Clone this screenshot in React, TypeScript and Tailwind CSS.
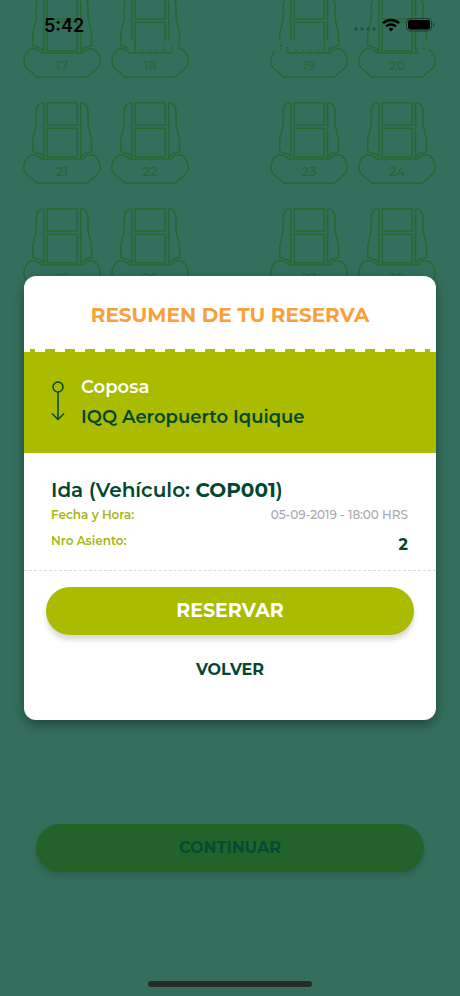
import { useState } from 'react'

interface SeatProps {
  number: number
  worn?: [number, number]
}

const seatRows = [
  [17, 18, 19, 20],
  [21, 22, 23, 24],
  [25, 26, 27, 28],
]

const wornSeats: Record<number, [number, number]> = {
  18: [18, 70],
  19: [5, 58],
  20: [60, 76],
}

function Seat({ number, worn }: SeatProps) {
  return (
    <button type="button" className="relative block h-[84px] w-[78px]" aria-label={`Asiento ${number}`}>
      <svg
        viewBox="0 0 78 84"
        className="block h-[84px] w-[78px]"
        fill="none"
        stroke="#24692f"
        strokeWidth="1.5"
        strokeLinejoin="round"
      >
        {/* respaldo */}
        <rect x="24" y="1.7" width="30.3" height="22.3" />
        <rect x="24" y="27.3" width="30.3" height="28.4" />
        <path d="M20.700 1.700v56.300M57.600 1.700v56.300" />
        <path d="M20.700 1.700C15 1.700 13.300 6 13.300 11v10c0 8-3.600 12-3.600 20v9.500l4 1.300c3 .5 5 1.500 7 4.200" />
        <path d="M57.600 1.700c5.700 0 7.400 4.300 7.400 9.300v10c0 8 3.600 12 3.600 20v9.500l-4 1.300c-3 .5-5 1.500-7 4.200" />
        {/* cojín */}
        <path d="M18.500 58h41.600c2-3 4.500-4.300 8-4.300 4.500 0 9.200 6 9.200 13 0 3.500-1.300 5-3 6.500L64 82.300H14L3.700 73.200C2 71.600.800 70 .800 66.700c0-7 4.400-13 9-13 3.700 0 6.300 1.300 8.700 4.300z" />
        {worn && (
          <line x1={worn[0]} x2={worn[1]} y1="51" y2="51" stroke="#346f5d" strokeWidth="12" strokeDasharray="5 2 4 3 6 2" />
        )}
      </svg>
      <span className="absolute inset-x-0 top-[60px] text-center text-[13px] leading-5 font-medium text-[#24692f]">
        {number}
      </span>
    </button>
  )
}

function StatusBar() {
  return (
    <div className="absolute inset-x-0 top-0 z-20 flex h-[50px] items-center justify-between pr-[25px] pl-[44px] text-black">
      <span className="pt-[2px] font-['Inter',sans-serif] text-lg font-semibold">5:42</span>
      <div className="flex items-center gap-[6px]">
        <svg viewBox="0 0 22 4" className="mt-2 h-1 w-[22px]" fill="#255044">
          <circle cx="2" cy="2" r="1.800" />
          <circle cx="8" cy="2" r="1.800" />
          <circle cx="14" cy="2" r="1.800" />
          <circle cx="20" cy="2" r="1.800" />
        </svg>
        <svg viewBox="0 0 18 14" className="h-[14px] w-[18px]" fill="none" stroke="currentColor" strokeWidth="2.500">
          <path d="M1 5.200a11.500 11.500 0 0 1 16 0" />
          <path d="M4 8.400a7.200 7.200 0 0 1 10 0" />
          <path d="M9 13.500L6.500 11a3.600 3.600 0 0 1 5 0z" fill="currentColor" stroke="none" />
        </svg>
        <svg viewBox="0 0 29 14" className="h-[14px] w-[29px]">
          <rect x=".5" y=".5" width="25" height="12.500" rx="3.800" fill="none" stroke="#1c3d33" />
          <rect x="2" y="2" width="22" height="9.500" rx="2.300" />
          <path d="M27 4.800c1.800.600 1.800 3.400 0 4z" fill="#1c3d33" />
        </svg>
      </div>
    </div>
  )
}

function RouteIcon() {
  return (
    <svg viewBox="0 0 14 42" className="h-[42px] w-[14px]" fill="none" stroke="#02472f" strokeWidth="1.500">
      <circle cx="7" cy="6" r="5" />
      <path d="M7 11v27.500M1 32.500l6 6 6-6" />
    </svg>
  )
}

function ReservationModal({ onClose }: { onClose: () => void }) {
  return (
    <div className="absolute inset-0 z-10 flex items-center justify-center px-6">
      <section
        role="dialog"
        aria-labelledby="resumen"
        className="w-full overflow-hidden rounded-xl bg-white text-[#02472f] shadow-[0_5px_12px_rgba(0,0,0,0.35)]"
      >
        <h1 id="resumen" className="pt-6 pb-[19px] text-center text-xl leading-[30px] font-bold text-[#f9a03a]">
          RESUMEN DE TU RESERVA
        </h1>
        {/* borde dentado */}
        <div className="mx-[6px] h-[3px] bg-[repeating-linear-gradient(90deg,#aabb00_0_5px,transparent_5px_15px,#aabb00_15px_20px)]" />
        <div className="flex items-center gap-4 bg-[#aabb00] pt-5 pr-7 pb-[21px] pl-[27px]">
          <RouteIcon />
          <div className="text-lg leading-[30px] font-semibold">
            <p className="text-white">Coposa</p>
            <p>IQQ Aeropuerto Iquique</p>
          </div>
        </div>

        <div className="border-b border-dashed border-[#dcdcdc] pt-[22px] pr-7 pb-[13px] pl-[27px]">
          <h2 className="text-xl leading-[30px] font-semibold">
            Ida (Vehículo: <b className="font-bold">COP001</b>)
          </h2>
          <dl className="text-xs leading-5">
            <div className="flex justify-between">
              <dt className="font-semibold text-[#a5b714]">Fecha y Hora:</dt>
              <dd className="font-medium text-[#a9a9ad]">05-09-2019 - 18:00 HRS</dd>
            </div>
            <div className="mt-[6px] flex justify-between">
              <dt className="font-semibold text-[#a5b714]">Nro Asiento:</dt>
              <dd className="pt-[2px] text-base leading-6 font-bold">2</dd>
            </div>
          </dl>
        </div>

        <div className="flex flex-col items-center px-[22px] pt-4 pb-[34px]">
          <button
            type="button"
            className="h-12 w-full rounded-full bg-[#aabb00] text-[19px] font-bold text-white shadow-[0_5px_5px_rgba(0,0,0,0.15)]"
          >
            RESERVAR
          </button>
          <button type="button" onClick={onClose} className="mt-[19px] h-8 px-6 text-base font-bold">
            VOLVER
          </button>
        </div>
      </section>
    </div>
  )
}

export default function App() {
  const [isModalOpen, setIsModalOpen] = useState(true)

  return (
    <div className="relative flex min-h-screen flex-col overflow-hidden bg-[#346f5d] font-['Montserrat','Inter',sans-serif]">
      <StatusBar />

      <main className="-mt-[5px] flex flex-1 flex-col gap-[22px] pr-6 pl-[23px]">
        {seatRows.map((row) => (
          <div key={row[0]} className="flex justify-between">
            <div className="flex gap-[10px]">
              {row.slice(0, 2).map((n) => (
                <Seat key={n} number={n} worn={wornSeats[n]} />
              ))}
            </div>
            <div className="flex gap-[10px]">
              {row.slice(2).map((n) => (
                <Seat key={n} number={n} worn={wornSeats[n]} />
              ))}
            </div>
          </div>
        ))}
      </main>

      <footer className="flex flex-col items-center px-9 pb-[9px]">
        <button
          type="button"
          onClick={() => setIsModalOpen(true)}
          className="h-12 w-full rounded-full bg-[#23632a] text-base font-bold text-[#024b34] shadow-[0_4px_6px_rgba(0,0,0,0.15)]"
        >
          CONTINUAR
        </button>
        <div className="mt-[109px] h-[6px] w-[164px] rounded-full bg-[#292b2a]" />
      </footer>

      {isModalOpen && <ReservationModal onClose={() => setIsModalOpen(false)} />}
    </div>
  )
}
